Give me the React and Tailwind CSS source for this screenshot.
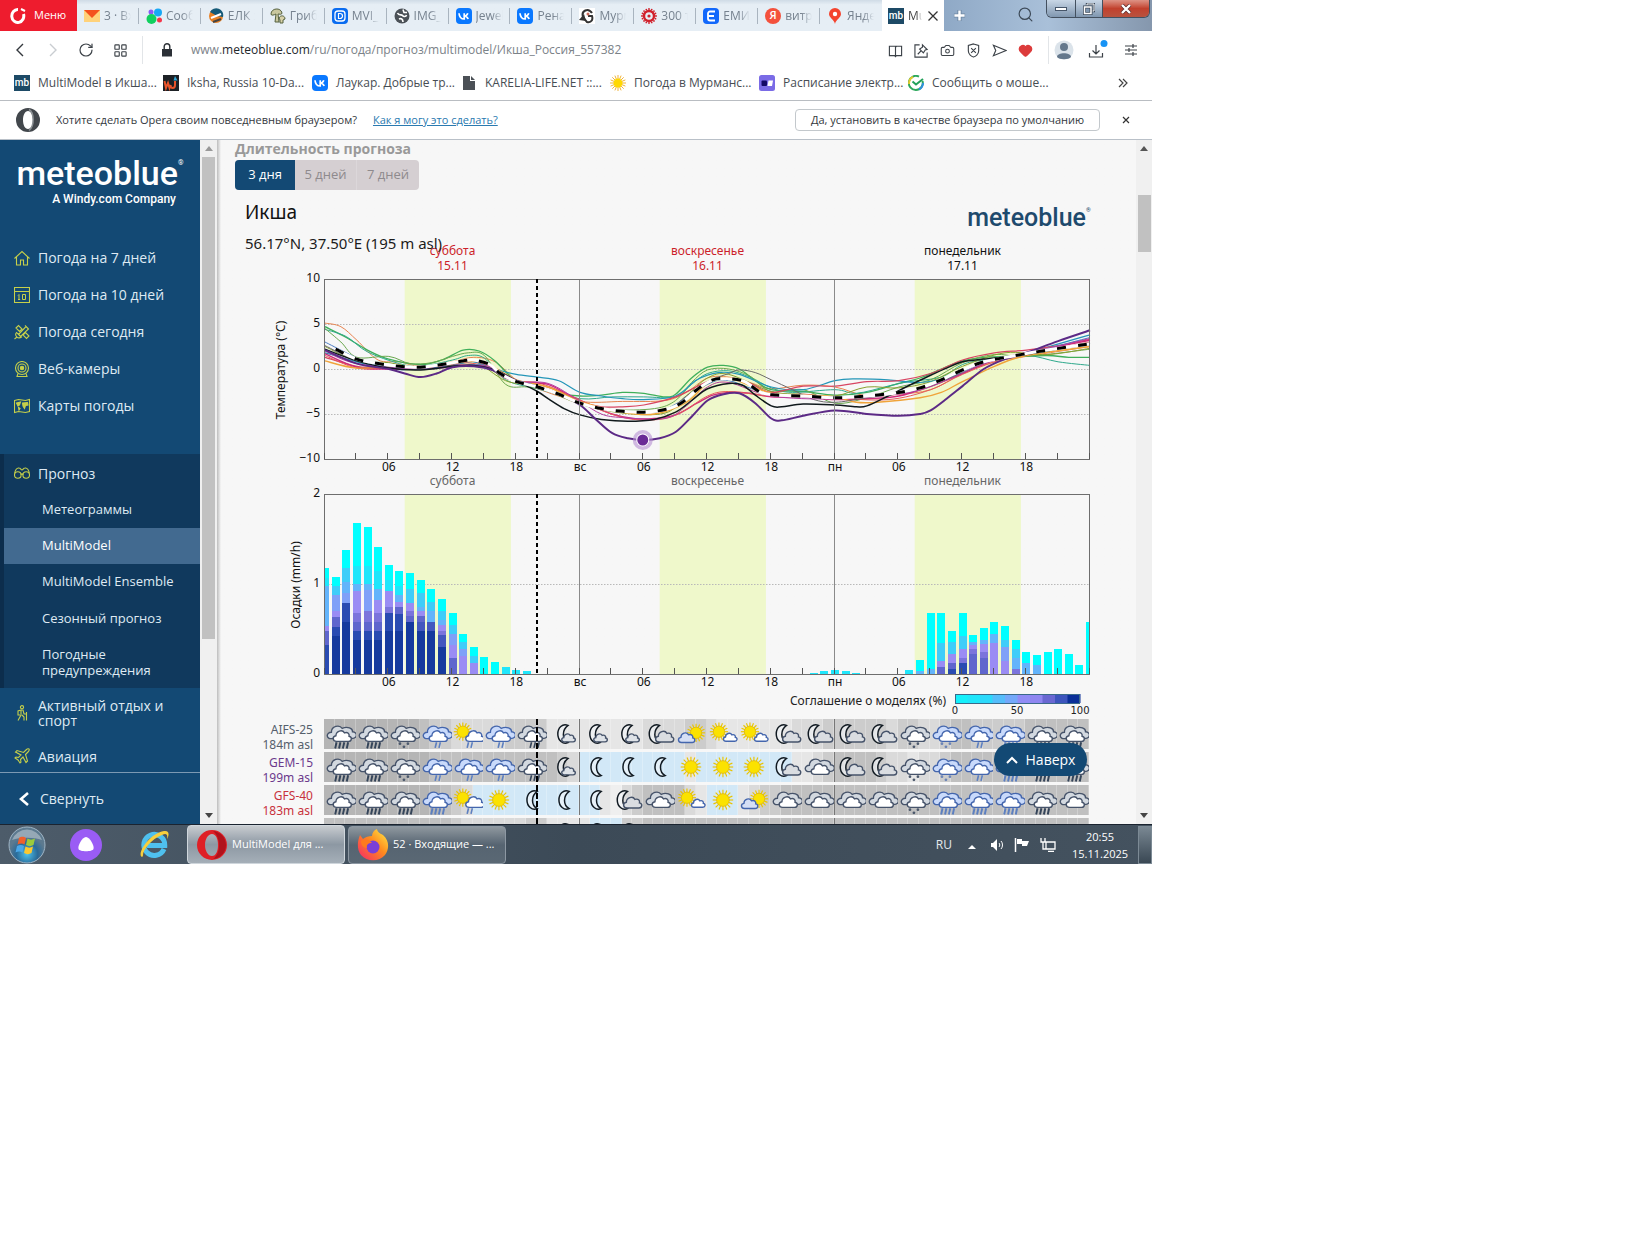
import React from "react";
import {
  BookOpen,
  Camera,
  SendHorizontal,
  Heart,
  Search,
  LayoutGrid,
  RotateCw,
} from "lucide-react";

const UI = "font-['Open_Sans','Noto_Sans',sans-serif]";

/* ---------- small brand marks ---------- */
const Mb = () => (
  <span className="flex h-4 w-4 shrink-0 items-center justify-center bg-[#1d4a66] font-['Roboto',sans-serif] text-[10px] font-medium text-white">
    mb
  </span>
);
const Vk = () => (
  <svg viewBox="0 0 16 16" className="h-4 w-4 shrink-0">
    <rect width="16" height="16" rx="4" fill="#0a78ff" />
    <path d="M3 5.200c.3 3.600 2 5.800 5.200 5.800V5.200M8.200 8c1.900-.1 3-1.200 3.600-2.800M8.200 8c2 .1 3.300 1.400 4 3" stroke="#fff" strokeWidth="1.700" fill="none" />
  </svg>
);
const Svg = ({ children, c = "h-4 w-4", vb = "0 0 16 16", ...p }) => (
  <svg viewBox={vb} className={"shrink-0 " + c} fill="none" {...p}>
    {children}
  </svg>
);

const RAYS = Array.from({ length: 16 }, (_, i) => (i * Math.PI) / 8);
const SunMark = () => (
  <Svg>
    {RAYS.map((a) => (
      <path key={a} d={`M8 8L${(8 + 8 * Math.cos(a)).toFixed(1)} ${(8 + 8 * Math.sin(a)).toFixed(1)}`} stroke="#f0b43c" />
    ))}
    <circle cx="8" cy="8" r="4.500" fill="#ffd800" />
  </Svg>
);

const tabs = [
  ["3 · Вх", <Svg><path d="M0 2h16v12H0z" fill="#ffd27a" /><path d="M0 2h16L8 10z" fill="#f4511e" /></Svg>],
  ["Сооб", <Svg><circle cx="5" cy="4" r="2.500" fill="#8a5cf6" /><circle cx="12" cy="4.500" r="4" fill="#18a8f5" /><circle cx="5.500" cy="11" r="5" fill="#11d05f" /><circle cx="13.500" cy="12" r="2.500" fill="#f5364a" /></Svg>],
  ["ЕЛК з", <Svg><circle cx="8" cy="8" r="7" fill="#e88024" /><path d="M2 4a7 7 0 0 1 13 5L9 8z" fill="#155a78" /><path d="M3 10l10-4" stroke="#fff" strokeWidth="2" /><path d="M5 14l8-3" stroke="#444" strokeWidth="2" /></Svg>],
  ["Гриб", <Svg><path d="M1 6c0-6 10-7 11-1 0 2-3 1-4 1l1 8H5l1-8C4 7 1 8 1 6z" fill="#c9c79e" stroke="#55613f" /><path d="M9 10c1-3 6-3 6 1l-2 1v3h-3v-3z" fill="#d8d1a8" stroke="#55613f" /></Svg>],
  ["MVI_", <Svg><rect width="16" height="16" rx="4" fill="#0a6cf0" /><rect x="3" y="3" width="10" height="10" rx="3" stroke="#fff" strokeWidth="1.300" /><path d="M6.500 5.500h1.500a2.500 2.500 0 0 1 0 5H6.500z" stroke="#fff" strokeWidth="1.200" /></Svg>],
  ["IMG_", <Svg><circle cx="8" cy="8" r="7.500" fill="#4b5157" /><path d="M3.500 5c1.500 3 4 1 5 2.500S12 9 12.500 7M9 1.500l1 3 3 0M5 11c2-1 4 0 4 3" stroke="#fff" strokeWidth="1.600" /></Svg>],
  ["Jewel", <Vk />],
  ["Рена", <Vk />],
  ["Мурм", <Svg><path d="M0 0h16v16H0z" fill="#fff" /><path d="M13 5C9-1 2 3 4 9l4 5c5 1 6-3 5-6H9" stroke="#333" strokeWidth="2" /><path d="M0 12l5-6 2 7z" fill="#333" /><circle cx="9" cy="6" r="1.500" fill="#c96a5a" /></Svg>],
  ["300 т", <Svg>{RAYS.map((a) => <circle key={a} cx={8 + 7 * Math.cos(a)} cy={8 + 7 * Math.sin(a)} r=".9" fill="#d1202b" />)}<circle cx="8" cy="8" r="5" stroke="#d1202b" strokeWidth="2.400" /><circle cx="8" cy="8" r="1.600" fill="#d1202b" /></Svg>],
  ["ЕМИА", <Svg><rect width="16" height="16" rx="4" fill="#1268fb" /><path d="M12 3.500H7a2 2 0 0 0-2 2v5a2 2 0 0 0 2 2h5M5 8h6" stroke="#fff" strokeWidth="1.800" /></Svg>],
  ["витра", <span className="flex h-4 w-4 shrink-0 items-center justify-center rounded-full bg-[#f4513c] text-[11px] font-semibold text-white">Я</span>],
  ["Янде", <Svg><path d="M8 0a6 6 0 0 1 6 6c0 4-5 5-6 10C7 11 2 10 2 6a6 6 0 0 1 6-6z" fill="#f4432e" /><circle cx="8" cy="6" r="2.200" fill="#fff" /></Svg>],
];

function TabStrip() {
  return (
    <div className="flex h-[31px] bg-linear-to-b from-[#cfdbe6] to-[#e6eef5] to-15%">
      <button className="flex w-[77px] shrink-0 items-center gap-2 bg-[#ee1c2e] pl-2.5 text-[11px] text-white">
        <Svg c="h-4 w-4"><path d="M8 1.500a6 6.500 0 1 0 5.500 4.500" stroke="#fff" strokeWidth="3" /><path d="M9.500 0.500v4.500" stroke="#ee1c2e" strokeWidth="1.500" /><path d="M11 1l4 2" stroke="#fff" strokeWidth="2" /></Svg>
        Меню
      </button>
      <div className="flex w-[805px] min-w-0">
        {tabs.map(([t, icon], i) => (
          <a key={t} href="#tab" className="flex min-w-0 flex-1 items-center pl-[7px] text-[12px] text-[#76828f]">
            {icon}
            <span className="ml-1 w-[27px] overflow-hidden whitespace-nowrap mask-r-from-60%">{t}</span>
            <span className={"ml-auto h-4 w-px " + (i < 12 ? "bg-[#a9b4bf]" : "")} />
          </a>
        ))}
      </div>
      <div className="flex w-[62px] shrink-0 items-center bg-white pl-1.5 text-[12px] text-[#444]">
        <Mb />
        <span className="ml-1 w-[14px] overflow-hidden whitespace-nowrap mask-r-from-60%">Mu</span>
        <button aria-label="Закрыть вкладку" className="ml-[5px]">
          <Svg c="h-3 w-3" vb="0 0 12 12"><path d="M1.500 1.500l9 9M10.500 1.500l-9 9" stroke="#333" strokeWidth="1.300" /></Svg>
        </button>
      </div>
      <div className="flex flex-1 items-start bg-linear-to-r from-[#8fa9c6] via-[#a9c0d9] to-[#8597ad] pr-0.5">
        <button aria-label="Новая вкладка" className="mt-[9px] ml-[9px]">
          <Svg c="h-[13px] w-[13px]" vb="0 0 14 14"><path d="M7 1v12M1 7h12" stroke="#6d87a3" strokeWidth="4.500" /><path d="M7 1.500v11M1.500 7h11" stroke="#fff" strokeWidth="2.600" /></Svg>
        </button>
        <Search className="mt-1.5 ml-auto h-[17px] w-[17px] text-[#3d4a58]" strokeWidth={1.7} />
        <div className="ml-3 flex h-[18px] w-[104px] shrink-0 overflow-hidden rounded-b-md border border-t-0 border-[#43505f]">
          <button aria-label="Свернуть" className="flex w-[29px] items-end justify-center border-r border-[#43505f] bg-linear-to-b from-[#c9d7e6] to-[#8097b0] pb-1.5">
            <span className="h-1 w-3 border border-[#46566a] bg-white" />
          </button>
          <button aria-label="Восстановить" className="flex w-[27px] items-center justify-center border-r border-[#43505f] bg-linear-to-b from-[#c9d7e6] to-[#8097b0]">
            <Svg c="h-3 w-3" vb="0 0 12 12"><path d="M4 1h7v7H4z" stroke="#3d4a5a" strokeWidth="2.400" /><path d="M4 1h7v7H4z" stroke="#fff" /><path d="M1.500 4h6.500v6.500H1.500z" fill="#8097b0" stroke="#3d4a5a" strokeWidth="3" /><path d="M1.500 4h6.500v6.500H1.500z" stroke="#fff" strokeWidth="1.500" /></Svg>
          </button>
          <button aria-label="Закрыть" className="flex flex-1 items-center justify-center bg-linear-to-b from-[#dd9285] via-[#c1402d] to-[#b8523e]">
            <Svg c="h-2.5 w-3" vb="0 0 12 10"><path d="M2 1l8 8M10 1l-8 8" stroke="#5a2a2a" strokeWidth="3.800" /><path d="M2 1l8 8M10 1l-8 8" stroke="#fff" strokeWidth="2.400" /></Svg>
          </button>
        </div>
      </div>
    </div>
  );
}

const ic = "h-[15px] w-[15px] text-[#3c4248]";

function AddressBar() {
  return (
    <div className="flex h-[38px] items-center bg-white pr-3.5 pl-3">
      <button aria-label="Назад" className="w-[33px]"><Svg c="h-4 w-4"><path d="M11 2L5 8l6 6" stroke="#33383d" strokeWidth="1.400" /></Svg></button>
      <button aria-label="Вперёд" className="w-[33px]"><Svg c="h-4 w-4"><path d="M5 2l6 6-6 6" stroke="#c9cdd1" strokeWidth="1.400" /></Svg></button>
      <button aria-label="Обновить" className="w-[35px]"><RotateCw className="h-4 w-4 text-[#3c4248]" strokeWidth={1.8} /></button>
      <button aria-label="Экспресс-панель" className="w-[29px]"><LayoutGrid className={ic} strokeWidth={1.8} /></button>
      <span className="h-7 w-px bg-[#e2e5e8]" />
      <Svg c="ml-[18px] h-[14px] w-3" vb="0 0 12 14"><path d="M1 6h10v7.500H1z" fill="#2b3036" /><path d="M3.200 6V3.500a2.800 2.800 0 0 1 5.600 0V6" stroke="#2b3036" strokeWidth="1.400" /></Svg>
      <a href="#page" className="ml-[18px] flex-1 text-[12px] whitespace-nowrap text-[#7b8288]">
        www.<span className="text-[#22272b]">meteoblue.com</span>/ru/погода/прогноз/multimodel/Икша_Россия_557382
      </a>
      <div className="flex items-center gap-[11px]">
        <Svg c="h-[15px] w-[15px]" stroke="#3c4248" strokeWidth="1.200"><path d="M8 3.500H1.500v10H7l1 1 1-1h5.500v-10H9l-1 1zM8 4v10" /></Svg>
        <Svg c="h-[15px] w-[15px]" stroke="#3c4248" strokeWidth="1.200"><path d="M6 2H1v13h13v-5M9 2l5 5-2 .5-2 3-4-4 3-2zM7.500 8.500L4 12" /></Svg>
        <Camera className={ic} strokeWidth={1.7} />
        <Svg c="h-[15px] w-[15px]" stroke="#3c4248" strokeWidth="1.200"><path d="M8 1l5.500 1.500v6C13.500 12 10 14.500 8 15c-2-.5-5.500-3-5.500-6.500v-6zM5.500 5.500l5 5M10.500 5.500l-5 5" /></Svg>
        <Svg c="h-[15px] w-[15px]" stroke="#3c4248" strokeWidth="1.200"><path d="M1.500 2.500L15 8 1.500 13.500 4 8z" /></Svg>
        <Heart className="h-[15px] w-[15px] fill-[#dc3b3b] text-[#dc3b3b]" />
      </div>
      <span className="ml-[15px] h-7 w-px bg-[#e2e5e8]" />
      <Svg c="ml-[5px] h-5 w-5" vb="0 0 20 20"><circle cx="10" cy="10" r="9.500" fill="#dbe3ea" /><circle cx="10" cy="7" r="4" fill="#64788c" /><path d="M3 17c0-5 14-5 14 0-2 3-12 3-14 0z" fill="#64788c" /></Svg>
      <button aria-label="Загрузки" className="ml-3.5">
        <Svg c="h-5 w-5" vb="0 0 20 20"><path d="M8 5v9M4.500 10.500L8 14l3.500-3.500M1.500 13v4h13v-4" stroke="#3c4248" strokeWidth="1.200" /><circle cx="16" cy="3.500" r="3.500" fill="#1793f5" /></Svg>
      </button>
      <button aria-label="Настройки" className="ml-4">
        <Svg c="h-3.5 w-3.5" vb="0 0 14 14"><path d="M1 3h12M1 7h12M1 11h12M9 1v4M5 5v4M9 9v4" stroke="#3c4248" strokeWidth="1.200" /></Svg>
      </button>
    </div>
  );
}

const bookmarks = [
  ["MultiModel в Икша...", <Mb />],
  ["Iksha, Russia 10-Da...", <Svg><rect width="16" height="16" fill="#1d2126" /><path d="M1.500 6l1.500 7 2-5 1.500 5 1-3c0 4 4.500 4 4.500 0V6" stroke="#e9542b" strokeWidth="2" /><path d="M12 1l2.500 4.500h-4z" fill="#35a9d8" /></Svg>],
  ["Лаукар. Добрые тр...", <Vk />],
  ["KARELIA-LIFE.NET ::...", <Svg><path d="M2 1h7v5h5v9H2zM10 1l4 4h-4z" fill="#4b5056" /></Svg>],
  ["Погода в Мурманс...", <SunMark />],
  ["Расписание электр...", <Svg><rect width="16" height="16" rx="2.500" fill="#7a6be6" /><rect x="2.500" y="5.500" width="5.500" height="5.500" rx="1" fill="#140a66" /><path d="M9.500 5.500H14L13 11H8.500z" fill="#fff" /></Svg>],
  ["Сообщить о моше...", <Svg><path d="M14.500 6A7 7 0 1 1 11 1.700" stroke="#2ca85c" strokeWidth="2" /><path d="M11 14.300A7 7 0 0 0 15 8" stroke="#2f8fe0" strokeWidth="2" /><path d="M1.200 9A7 7 0 0 1 5 1.800" stroke="#e6c92f" strokeWidth="2" /><path d="M4.500 6.500l3.500 3 7-5.500" stroke="#21a05a" strokeWidth="2" /></Svg>],
];

function Bookmarks() {
  return (
    <nav className="flex h-8 items-center border-b border-[#b9bdc2] bg-white pr-6 pb-1 pl-3.5 text-[12px] text-[#474d53]">
      {bookmarks.map(([t, icon]) => (
        <a key={t} href="#bookmark" className="flex w-[149px] items-center gap-2 whitespace-nowrap">
          {icon}
          {t}
        </a>
      ))}
      <button aria-label="Ещё закладки" className="ml-auto">
        <Svg c="h-2.5 w-2.5" vb="0 0 10 10"><path d="M1 1l4 4-4 4M5 1l4 4-4 4" stroke="#444" strokeWidth="1.200" /></Svg>
      </button>
    </nav>
  );
}

function Notice() {
  return (
    <div className="flex h-[39px] items-center border-b border-[#b9c0c8] bg-white pl-4 text-[11px] text-[#33383d]">
      <Svg c="h-6 w-6" vb="0 0 24 24"><path fillRule="evenodd" d="M12 0a12 12 0 1 0 0 24 12 12 0 0 0 0-24zM12 3c3 0 5 4 5 9s-2 9-5 9-5-4-5-9 2-9 5-9z" fill="#42474c" /><path d="M13 1.500c5 3 6 16 0 21" stroke="#8b9094" strokeWidth="1.500" /></Svg>
      <span className="ml-4 whitespace-nowrap">Хотите сделать Opera своим повседневным браузером?</span>
      <a href="#how" className="ml-4 whitespace-nowrap text-[#2a7ab0] underline">Как я могу это сделать?</a>
      <button className="ml-auto h-[22px] w-[305px] rounded border border-[#c3c8cc] whitespace-nowrap">Да, установить в качестве браузера по умолчанию</button>
      <button aria-label="Закрыть" className="mr-[22px] ml-[22px]">
        <Svg c="h-2 w-2" vb="0 0 8 8"><path d="M1 1l6 6M7 1L1 7" stroke="#333" strokeWidth="1.200" /></Svg>
      </button>
    </div>
  );
}

/* ---------- sidebar ---------- */
const Y = { stroke: "#c6d04a", strokeWidth: 1.1 };
const nav = [
  ["Погода на 7 дней", <Svg {...Y}><path d="M.5 8.500L8 1.500l7.500 7M2.500 7v8h4v-5h3v5h4V7" /></Svg>],
  ["Погода на 10 дней", <Svg {...Y}><path d="M.5.500h15v15H.5zM.5 4.500h15" /><path d="M5 7.500v5M4 12.500h2.200M4 8.500l1-1M8.500 7.500h3v5h-3z" strokeWidth="1" /></Svg>],
  ["Погода сегодня", <Svg {...Y}><path d="M2 4l2.500-2.500 3.500 3.500-2.500 2.500zM9 11l2.500-2.500 3.500 3.500-2.500 2.500zM4.500 10.500l7.500-8 2.500 2.500-8 7.500zM11 1.500l3.500 3.500M2.500 8.500c-2.500 3 1.500 7 5 4.500zM.5 15l2.500-2" /></Svg>],
  ["Веб-камеры", <Svg {...Y}><circle cx="8" cy="7" r="6.500" /><circle cx="8" cy="7" r="4" /><circle cx="8" cy="7" r="1.700" fill="#c6d04a" /><path d="M4 12.500l-1 3h10l-1-3" /></Svg>],
  ["Карты погоды", <Svg {...Y}><path d="M.5 2.500l4-1 7 1 4-1v12l-4 1-7-1-4 1z" /><path d="M2.500 5l4-1-1 3-1.500 1zM8.500 5l5-.5.5 2.500-2.500.5-1 3-1.500-2.500zM4.500 9.500l1.500 1-1 1.500z" fill="#c6d04a" /></Svg>],
];

function Sidebar() {
  const item = "flex h-[37px] items-center gap-2 pl-3.5 text-[14px] text-[#dfeaf3]";
  return (
    <aside className="flex w-[200px] shrink-0 flex-col bg-[#134974] text-[#dfeaf3]">
      <a href="#home" className="flex flex-col items-end pt-[13px] pr-[22px] font-['Roboto',sans-serif] text-white">
        <span className="flex items-start text-[34px] leading-10 font-medium">
          meteoblue<span className="-mr-1 w-1 text-[7px] leading-5 font-normal">®</span>
        </span>
        <span className="mr-0.5 text-[12px] leading-3 font-medium">A Windy.com Company</span>
      </a>
      <nav className="mt-[34px]">
        {nav.map(([t, icon]) => (
          <a key={t} href="#nav" className={item}>{icon}{t}</a>
        ))}
      </nav>
      <section className="mt-[30px] h-[234px] border-l-4 border-[#0c2d4c] bg-[#10395d] text-[13px]">
        <a href="#forecast" className="flex h-[38px] items-center gap-2 pl-2.5 text-[14px]">
          <Svg {...Y}><circle cx="3.800" cy="10" r="3.300" /><circle cx="12.200" cy="10" r="3.300" /><path d="M7 10c0-1.500 2-1.500 2 0M.7 8.500C1 5 3 2.500 5 3c1.500 0 2 2 3 2s1.500-2 3-2c2-.5 4 2 4.300 5.500" /></Svg>
          Прогноз
        </a>
        <a href="#meteogram" className="flex h-9 items-center pl-[38px]">Метеограммы</a>
        <a href="#multimodel" className="flex h-9 items-center bg-[#426a90] pl-[38px] text-white">MultiModel</a>
        <a href="#ensemble" className="flex h-9 items-center pl-[38px]">MultiModel Ensemble</a>
        <a href="#season" className="flex h-[38px] items-center pl-[38px]">Сезонный прогноз</a>
        <a href="#warnings" className="mt-2 block pl-[38px] leading-4">Погодные<br />предупреждения</a>
      </section>
      <a href="#sport" className="mt-2.5 flex items-center gap-2 pl-3.5 text-[14px] leading-[15px]">
        <Svg {...Y}><circle cx="8" cy="2.200" r="1.600" /><path d="M7 5l-3 1v4h2M7 5l2 0 1 4 2 0M7 5v5l-3 5.500M8 10l2 2v3.500M12.500 7v8.500" /></Svg>
        <span>Активный отдых и<br />спорт</span>
      </a>
      <a href="#aviation" className="mt-[19px] flex h-[18px] items-center gap-2 pl-3.5 text-[14px]">
        <Svg {...Y}><path d="M15 1c-1-.7-2 0-3 1L9.500 4.500 3 2.500 1.500 4 7 7 4.500 9.500 2 9 1 10l3 2 2 3 1-1-.5-2.500L9 9l3 5.500 1.500-1.500-2-6.500L14 4c1-1 1.700-2 1-3z" /></Svg>
        Авиация
      </a>
      <button className="mt-auto flex h-[52px] items-center gap-2.5 border-t border-[#7c99b3] pl-[18px] text-[14px]">
        <Svg c="h-4 w-3" vb="0 0 12 16"><path d="M10 2L3 8l7 6" stroke="#fff" strokeWidth="2.600" /></Svg>
        Свернуть
      </button>
    </aside>
  );
}

/* ---------- charts ---------- */
const PX = 10.625;
const X0 = 90;
const T0 = 139;
const cx = (h) => X0 + h * PX;
const ty = (t) => T0 - t * 9;

function curve(flat) {
  const p = [];
  for (let i = 0; i < flat.length; i += 2) p.push([cx(flat[i]), ty(flat[i + 1])]);
  let d = `M${p[0][0]} ${p[0][1]}`;
  for (let i = 0; i < p.length - 1; i++) {
    const a = p[i - 1] || p[i];
    const b = p[i];
    const c = p[i + 1];
    const e = p[i + 2] || c;
    d += `C${(b[0] + (c[0] - a[0]) / 6).toFixed(1)} ${(b[1] + (c[1] - a[1]) / 6).toFixed(1)} ${(c[0] - (e[0] - b[0]) / 6).toFixed(1)} ${(c[1] - (e[1] - b[1]) / 6).toFixed(1)} ${c[0].toFixed(1)} ${c[1].toFixed(1)}`;
  }
  return d;
}

const series = [
  ["#e8834f", 1, [0, 5.1, 1.5, 4.7, 3, 3.2, 5, 1, 7, 0.8, 9, 0.3, 12, 0.8, 14, 1.3, 16, 0.8, 18, -1.2, 20, -2.2, 24, -3.6, 28, -3.6, 32, -3.5, 34, -2.6, 36, -1, 38, -0.9, 40, -1.5, 42, -2.2, 45, -1.8, 48, -2, 51, -3, 54, -2.8, 57, -2.3, 60, -0.5, 63, 0.8, 66, 1.4, 72, 2.5]],
  ["#3faf5a", 1.3, [0, 4.7, 2, 3.5, 4, 2.1, 6, 1.1, 9, 0.5, 11, 1, 13, 2.1, 14.5, 2, 16, 0.9, 18, -1.4, 20, -2.1, 22, -2.7, 24, -3, 26, -2.9, 28, -2.6, 30, -2.7, 32, -3.1, 33, -2.8, 34.5, -1, 36, 0.2, 37.5, 0.4, 39, 0, 40.5, -1.3, 42, -2.3, 45, -2.5, 48, -2.9, 51, -2.6, 54, -1.6, 56, -1, 58, 0, 60, 0.9, 62, 1.3, 65, 1.4, 68, 1.5, 70, 1.3, 72, 1.3]],
  ["#2fa98c", 1, [0, 4.4, 2, 3.6, 4, 1.9, 7, 0.6, 9, 0.3, 12, 1, 13.5, 1.5, 15, 1.2, 17, -1.2, 20, -2.2, 24, -3.3, 27, -3.1, 30, -3.1, 33, -3.1, 34.5, -1.7, 36, -0.5, 38, -0.2, 40, -0.9, 42, -2.1, 44, -2.6, 48, -2.3, 50, -2.7, 53, -1.9, 55, -1.4, 58, -0.9, 60, 0.5, 62, 1, 66, 1.5, 69, 0.8, 72, 0.4]],
  ["#6aa84f", 1, [0, 4.5, 1.5, 3, 3, 1.3, 6, 1.4, 8, 0.6, 10, 0.7, 12, 1.4, 13.5, 1.8, 15, 1.5, 17, -1.7, 19, -2, 21, -2.4, 24, -3.7, 27, -4.5, 31, -4.4, 33, -3.5, 34.5, -1.5, 36, -0.1, 38, 0, 40, -0.8, 42, -2.5, 45, -2.3, 48, -3.8, 51, -3.2, 54, -2, 57, -1.2, 60, 0.7, 63, 1.6, 66, 1.4, 72, 2.2]],
  ["#88a030", 1, [0, 2.5, 3, 0.9, 6, 0.7, 9, 0.1, 12, 0.5, 14, 0.9, 17, -1.3, 20, -2, 24, -3.9, 28, -4.9, 32, -4.9, 34, -3, 36, -1, 38, -0.6, 42, -2.5, 45, -2.8, 48, -3, 51, -2, 54, -2.1, 57, -1.4, 60, 0.3, 64, 1.8, 68, 1.6, 72, 2.3]],
  ["#2496b8", 1.2, [0, 1.8, 3, 0.8, 6, 0, 9, 0, 12, 0.4, 14, 0.8, 16, 0, 18, -0.6, 20, -0.9, 22, -1.3, 24, -2.6, 26, -3, 28, -3.3, 30, -3.4, 33, -3, 35, -1.2, 37, -0.4, 39, -0.6, 42, -2, 45, -2.3, 48, -1.3, 50, -1.1, 53, -1.2, 56, -1.5, 59, -0.8, 62, 0.9, 66, 1.8, 72, 3.8]],
  ["#d84562", 1.2, [0, 1.3, 3, 0.3, 6, 0.1, 9, 0.1, 12, 0.6, 14, 0.9, 16, 0, 18, -1.3, 20, -1.5, 22, -2.4, 24, -3.6, 26, -4.2, 28, -4.2, 30, -4, 33, -3.1, 36, -1.4, 38, -1, 40, -1.6, 42, -2.6, 45, -1.9, 48, -1.9, 51, -1.4, 54, -1.3, 57, -0.5, 60, 1, 63, 1.8, 66, 2.1, 69, 2.6, 72, 3.3]],
  ["#d02a7c", 1.4, [0, 1.7, 3, 0.2, 6, 0, 9, 0.1, 12, 0.4, 15, 0.3, 17, -1, 19, -1.5, 21, -1.7, 23, -2.9, 25, -4, 27, -5, 29, -5.5, 31, -5.5, 33, -5.1, 35, -3.8, 36.5, -2.9, 38, -2.6, 40, -2.7, 42, -3.1, 45, -3.1, 48, -3.4, 51, -3.3, 54, -3, 57, -1.9, 60, -0.5, 63, 1, 66, 1.8, 72, 3.2]],
  ["#e65a5a", 1, [0, 1.5, 3, 0.1, 6, 0.1, 9, 0.1, 13, 0.7, 16, 0, 18, -1.4, 20, -1.7, 23, -2.9, 26, -4.6, 29, -5.6, 32, -5.5, 34, -4.5, 36, -3, 38, -2.5, 42, -3, 45, -2.8, 48, -3.2, 53, -3.4, 57, -2.3, 60, -0.6, 64, 1.1, 72, 3]],
  ["#f0a43a", 1.4, [0, 0.9, 3, 0.1, 7, 0.4, 9, 0.1, 13, 0.8, 15, 0.7, 18, -1.2, 21, -2, 24, -3.6, 28, -4.8, 31, -5, 34, -3.7, 36, -1.6, 38, -1, 42, -2.7, 45, -2.9, 48, -3.1, 50, -3.7, 52, -3.7, 56, -3.2, 58, -2.6, 60, -1.4, 63, 0.3, 66, 1.5, 72, 2.5]],
  ["#4a7cc4", 1, [0, 3, 2, 1.8, 4, 0.7, 6, 0.2, 9, 0, 12, 0.3, 15, 0.4, 17, -0.9, 20, -1.9, 24, -3.8, 27, -4.6, 31, -4.8, 33, -3.9, 36, -1.7, 38, -1.3, 42, -2.8, 48, -3.1, 54, -2.6, 58, -1.3, 62, 0.7, 66, 1.7, 72, 3.5]],
  ["#6a6a6a", 1, [0, 2.6, 3, 1, 7, 0.3, 12, 0.4, 15, 0.2, 17, -1, 20, -2, 24, -3.8, 28, -4.7, 32, -4.6, 34, -3, 36, -1.4, 38, -0.5, 39, -0.1, 40.5, -0.4, 42, -1.2, 44, -2.3, 46, -3.4, 48, -3.7, 51, -3.2, 56, -2.3, 60, -0.4, 64, 1.3, 72, 2.7]],
  ["#b43fa0", 1, [0, 2, 3, 0.6, 9, 0, 14, 0.4, 16, 0, 18, -1.4, 21, -1.6, 24, -3.6, 26, -5, 28, -5.4, 32, -5.5, 34, -4.1, 36, -2, 38, -1.5, 42, -3, 48, -3.3, 55, -2.6, 59, -1, 62, 0.6, 66, 1.7, 72, 3.4]],
  ["#10191c", 1.5, [0, 2.2, 3, 0.9, 6, 0.1, 9, -0.1, 12, 0.3, 14, 0.4, 16, -0.1, 18, -1.3, 20, -2.5, 21, -3.3, 22.5, -4.4, 24, -5.1, 26, -5.6, 28.5, -5.8, 31, -5.6, 33, -4.8, 34.5, -3.5, 36, -2.2, 38, -1.6, 39.3, -1.8, 40.5, -2.9, 42, -4.1, 43, -4.2, 45, -3.9, 48, -4, 50, -4.2, 51, -4.1, 53, -3, 55, -1.8, 57, -0.7, 58.5, 0.1, 60, 0.8, 62, 1.1, 66, 1.6, 72, 2.9]],
  ["#5c2a86", 2, [0, 2.1, 3, 0.6, 6, 0, 7.5, -0.5, 9, -0.9, 10.5, -0.5, 12, 0.2, 14, 0.3, 16, -0.2, 18, -1.3, 20, -2, 22, -2.8, 24, -4, 25.5, -5.6, 27, -7.1, 28.5, -7.7, 30, -7.9, 31.5, -7.7, 33, -7, 34.5, -5.3, 36, -3.5, 37.5, -2.8, 39, -2.7, 40.5, -3.8, 42, -5.5, 43, -5.7, 45, -5.2, 48, -4.6, 51, -5, 54, -5.2, 56, -5, 57, -4.6, 58.5, -3.3, 60, -1.9, 62, 0, 64, 1.1, 66, 1.8, 69, 3.1, 72, 4.3]],
];
const mean = curve([1, 2.2, 3, 1.1, 5, 0.6, 7, 0.3, 9, 0.2, 11, 0.5, 13, 0.9, 14, 1, 15.5, 0.5, 16.5, -0.5, 18, -1.4, 20, -2, 22, -2.8, 24, -3.8, 26, -4.4, 28, -4.7, 30, -4.8, 32, -4.5, 33.5, -3.8, 35, -2.3, 36.5, -1.2, 38, -1.1, 39.5, -1.4, 41, -2.6, 42.5, -2.9, 45, -3, 48, -3.2, 51, -3, 54, -2.6, 56, -2.1, 58, -1.2, 60, -0.1, 62, 0.8, 65, 1.5, 68, 2.1, 72, 2.8]);

const shades = ["#00ffff", "#1fe6fb", "#3fcdf9", "#63b4fb", "#7fa0f8", "#9a8cf4", "#7b74dc", "#5f66cd", "#4357bf", "#2a4bb2", "#163a9e"];
/* hour, then pairs of (top in mm/h, shade) from light to dark */
const rain = [
  [0, 1.18, 0, 1.07, 1, 0.98, 3, 0.53, 5, 0.48, 7, 0.32, 9],
  [1, 1.08, 0, 0.98, 2, 0.88, 4, 0.7, 5, 0.63, 7, 0.52, 9, 0.42, 10],
  [2, 1.38, 0, 1.18, 2, 1.02, 3, 0.9, 4, 0.79, 9, 0.58, 10],
  [3, 1.68, 0, 1.2, 1, 1, 3, 0.92, 5, 0.68, 6, 0.58, 7, 0.48, 9, 0.38, 10],
  [4, 1.63, 0, 1.2, 1, 1, 3, 0.93, 4, 0.7, 6, 0.58, 7, 0.48, 9, 0.38, 10],
  [5, 1.41, 0, 1.15, 1, 0.95, 3, 0.82, 5, 0.68, 6, 0.58, 7, 0.48, 9, 0.38, 10],
  [6, 1.21, 0, 1.05, 1, 0.92, 5, 0.75, 6, 0.68, 9, 0.48, 10],
  [7, 1.14, 0, 0.98, 1, 0.88, 3, 0.8, 5, 0.74, 7, 0.67, 9, 0.48, 10],
  [8, 1.12, 0, 0.95, 2, 0.79, 5, 0.7, 6, 0.65, 7, 0.58, 10],
  [9, 1.05, 0, 0.9, 2, 0.75, 3, 0.7, 5, 0.65, 7, 0.58, 8, 0.48, 10],
  [10, 0.95, 0, 0.8, 2, 0.7, 3, 0.58, 8, 0.48, 10],
  [11, 0.83, 0, 0.7, 2, 0.6, 3, 0.55, 5, 0.48, 6, 0.43, 8, 0.3, 10],
  [12, 0.68, 0, 0.55, 2, 0.45, 4, 0.32, 5, 0.18, 7],
  [13, 0.45, 0, 0.36, 2, 0.28, 4, 0.2, 5],
  [14, 0.3, 0, 0.2, 2, 0.12, 5],
  [15, 0.19, 0], [16, 0.13, 0], [17, 0.08, 1], [18, 0.05, 1], [19, 0.03, 1],
  [46, 0.01, 1], [47, 0.03, 1], [48, 0.05, 1], [49, 0.03, 1], [50, 0.01, 1], [55, 0.05, 1],
  [56, 0.16, 0, 0.03, 3],
  [57, 0.68, 0, 0.06, 3],
  [58, 0.68, 0, 0.35, 2, 0.15, 5, 0.08, 7],
  [59, 0.48, 0, 0.36, 2, 0.22, 5, 0.12, 7, 0.06, 9],
  [60, 0.68, 0, 0.42, 2, 0.28, 5, 0.18, 6, 0.12, 9],
  [61, 0.43, 0, 0.36, 3, 0.32, 5, 0.28, 6, 0.22, 7],
  [62, 0.51, 0, 0.38, 3, 0.33, 5, 0.25, 6, 0.18, 7],
  [63, 0.58, 0, 0.45, 3, 0.35, 5],
  [64, 0.53, 0, 0.38, 2, 0.3, 4, 0.15, 5],
  [65, 0.38, 0, 0.28, 2, 0.18, 3, 0.06, 6],
  [66, 0.25, 0, 0.12, 3], [67, 0.21, 0, 0.1, 3], [68, 0.25, 0], [69, 0.28, 0], [70, 0.22, 0], [71, 0.1, 0], [72, 0.58, 0],
];
const P0 = 444;
const days = ["суббота", "воскресенье", "понедельник"];
const dates = ["15.11", "16.11", "17.11"];
const legend = ["#14f0fb", "#1fe6fb", "#2cd9fb", "#55bdfb", "#74a8fa", "#918cf5", "#8f86f0", "#6a68d2", "#3d55bd", "#0a2f98"];

function Frame({ top, bottom }) {
  return (
    <g shapeRendering="crispEdges" transform="translate(-1 0)">
      {[24, 48].map((h) => <path key={h} d={`M${cx(h)} ${top}V${bottom}`} stroke="#8a8a8a" />)}
      <rect x={X0} y={top} width={765} height={bottom - top} fill="none" stroke="#6e6e6e" />
      {Array.from({ length: 25 }, (_, i) => <path key={i} d={`M${cx(i * 3)} ${bottom}v-6`} stroke="#555" />)}
      <path d={`M${cx(20)} ${top}V${bottom}`} stroke="#000" strokeWidth="2" strokeDasharray="4 3" />
    </g>
  );
}

function Charts() {
  const hours = [[6, "06"], [12, "12"], [18, "18"], [24, "вс"], [30, "06"], [36, "12"], [42, "18"], [48, "пн"], [54, "06"], [60, "12"], [66, "18"]];
  return (
    <svg viewBox="0 0 865 489" className="block w-full font-['Noto_Sans','DejaVu_Sans',sans-serif]" fontSize="12" role="img" aria-label="Температура и осадки">
      {[0, 1, 2].map((d) => (
        <g key={d}>
          <rect x={cx(24 * d + 7.5)} y="49" width={10 * PX} height="180" fill="#eff8cb" />
          <rect x={cx(24 * d + 7.5)} y="264" width={10 * PX} height="180" fill="#eff8cb" />
          <g textAnchor="middle">
            <g fill={d < 2 ? "#cc1f2b" : "#111"}>
              <text x={cx(24 * d + 12)} y="25">{days[d]}</text>
              <text x={cx(24 * d + 12)} y="40">{dates[d]}</text>
            </g>
            <text x={cx(24 * d + 12)} y="255" fill="#666">{days[d]}</text>
          </g>
        </g>
      ))}
      <text x="10" y="19" fontSize="15" fill="#1c1c1c">56.17°N, 37.50°E (195 m asl)</text>
      {[5, 0, -5].map((t) => <path key={t} d={`M${X0} ${ty(t) + 0.5}h765`} stroke="#b9b9b9" strokeDasharray="1.500 1.500" />)}
      <path d={`M${X0} 354.500h765`} stroke="#b9b9b9" strokeDasharray="1.500 1.500" />
      <g textAnchor="end" fill="#111">
        {[10, 5, 0, -5, -10].map((t) => <text key={t} x="85" y={ty(t) + 3}>{t < 0 ? "−" + -t : t}</text>)}
        {[2, 1, 0].map((v) => <text key={v} x="85" y={P0 - 90 * v + 3}>{v}</text>)}
      </g>
      <g textAnchor="middle" fill="#111">
        <text transform="translate(50 140) rotate(-90)">Температура (°C)</text>
        <text transform="translate(65 355) rotate(-90)">Осадки (mm/h)</text>
        {hours.map(([h, t]) => (
          <g key={h}>
            <text x={cx(h)} y="241">{t}</text>
            <text x={cx(h)} y="456">{t}</text>
          </g>
        ))}
      </g>
      <g fill="none" strokeLinejoin="round">
        {series.map(([c, w, pts]) => <path key={c} d={curve(pts)} stroke={c} strokeWidth={w} />)}
        <path d={mean} stroke="#fff" strokeWidth="3" />
        <path d={mean} stroke="#000" strokeWidth="3" strokeDasharray="9 12" />
      </g>
      <circle cx={cx(30) - 1} cy="210" r="10" fill="#b58fd2" fillOpacity=".6" />
      <circle cx={cx(30) - 1} cy="210" r="6.500" fill="#fff" />
      <circle cx={cx(30) - 1} cy="210" r="5.500" fill="#6a2a96" />
      <g shapeRendering="crispEdges">
        {rain.map(([h, ...s]) => {
          const x = h === 0 ? X0 : cx(h) - 4;
          const w = h === 0 || h === 72 ? 4 : 8;
          return s.map((v, i) => (i % 2 ? null : <rect key={h + "-" + i} x={x} y={P0 - v * 90} width={w} height={v * 90} fill={shades[s[i + 1]]} />));
        })}
      </g>
      <Frame top={49} bottom={229} />
      <Frame top={264} bottom={444} />
      <text x="711" y="475" textAnchor="end" fill="#222">Соглашение о моделях (%)</text>
      {legend.map((c, i) => <rect key={c} x={720 + i * 12.5} y="464" width="13" height="9" fill={c} />)}
      <rect x="720.500" y="464.500" width="124" height="9" fill="none" stroke="#3a6a8a" />
      <g textAnchor="middle" fontSize="10" fill="#222" className="font-['DejaVu_Sans',sans-serif]">
        <text x="720" y="484">0</text>
        <text x="782" y="484">50</text>
        <text x="845" y="484">100</text>
      </g>
    </svg>
  );
}

/* ---------- weather pictograms, one per three hours ---------- */
const DK = "#46536a";
const BL = "#4466ad";
const Puff = ({ x, y, s = 1, c = DK, f = "#fff" }) => (
  <path transform={`translate(${x} ${y}) scale(${s})`} d="M3.500 10.500C0 10.500-.5 6 3 5.500 3 1.500 8.500-.5 10.500 3c3-1 4.500 1 4 3 3 .5 2.500 4.500-.5 4.500z" fill={f} stroke={c} strokeWidth={1.2 / s} />
);
const Clouds = ({ c }) => {
  const f = c === BL ? "#c9dafb" : "#d3d9e0";
  return (
    <g>
      <path d="M9 19C3 20 3 13.500 8 13.500 8 8 15 6.500 17.500 10 22 8 27 10 26.500 13c5 .5 4.500 6-1 6z" fill={f} stroke={c} strokeWidth="1.200" />
      <Puff x={9} y={11} c={c} />
    </g>
  );
};
const Drops = ({ c, n = 4 }) => (
  <g stroke={c === BL ? "#5c7fc0" : "#344459"} strokeWidth={n === 4 ? 1.7 : 1.4}>
    {Array.from({ length: n }, (_, i) => <path key={i} d={`M${(n === 4 ? 12.5 : 16) + i * 3.4} 22.200l-1.200 ${n === 4 ? 5.5 : 5}`} />)}
  </g>
);
const Flakes = ({ c }) => (
  <g fill={c === BL ? "#6c84b5" : "#4c596c"}>
    <circle cx="12" cy="23.500" r="1.200" /><circle cx="15.500" cy="26.300" r="1.200" /><circle cx="19" cy="23.500" r="1.200" />
  </g>
);
const Sun = ({ x = 15.5, y = 15, r = 9 }) => (
  <g>
    {RAYS.map((a) => <path key={a} d={`M${x} ${y}L${(x + r * Math.cos(a)).toFixed(1)} ${(y + r * Math.sin(a)).toFixed(1)}`} stroke="#e9c400" />)}
    <circle cx={x} cy={y} r={r * 0.62} fill="#fbe200" stroke="#e0bb10" strokeWidth=".8" />
  </g>
);
const Moon = ({ x = 1 }) => <path transform={`translate(${x} 0)`} d="M20 7.500c-5-2-9 2-9 7.500s4.500 9.500 9 7.500c-5.500-3-5.500-11 0-15z" fill="#f3f7fa" fillOpacity=".6" stroke="#111a22" strokeWidth="1.300" />;

const icons = {
  R: <g><Clouds c={DK} /><Drops c={DK} /></g>,
  r: <g><Clouds c={DK} /><Drops c={DK} n={3} /></g>,
  S: <g><Clouds c={DK} /><Flakes c={DK} /></g>,
  s: <g><Clouds c={BL} /><Flakes c={BL} /></g>,
  B: <g><Clouds c={BL} /><Drops c={BL} /></g>,
  b: <g><Clouds c={BL} /><Drops c={BL} n={2} /></g>,
  C: <Clouds c={DK} />,
  P: <g><Sun x={11} y={13} r={8} /><Puff x={13} y={11} c={BL} /><Drops c={BL} n={2} /></g>,
  O: <Sun />,
  o: <g><Sun x={12} y={13} r={8} /><Puff x={15.5} y={13.5} s={0.75} c={BL} /></g>,
  Q: <g><Sun x={20} y={14} r={8} /><Puff x={4} y={13} s={0.9} c={BL} f="#d5dff5" /></g>,
  M: <Moon />,
  m: <g><Moon x={0} /><Puff x={14} y={14} s={0.75} f="#dfe3e8" /></g>,
  N: <g><Moon x={-4} /><Puff x={12} y={11.5} f="#dadde1" /></g>,
};
const bgs = {
  a: "bg-[#b5b5b5]",
  b: "bg-[#c0c0c0]",
  c: "bg-[#cccccc]",
  d: "bg-[#dadada]",
  e: "bg-[#e6e6e6]",
  f: "bg-[#efefef]",
  s: "bg-[#d2e8f7]",
};
const models = [
  ["AIFS-25", "184m asl", "text-[#55606c]", "RRSbPbrmmmNQooNNNNSsbBRR", "aaaaaaaaabccdddddcccceeeeeeeeeddddccdeeeeeeedddccccccdccddcbbcccccbbbbbb"],
  ["GEM-15", "199m asl", "text-[#6b3a8c]", "RRSbbbrmMMMOOONCNNSsbBRR", "aaaaaaaaaabbbbbbbbbbbbcdssssssssssessssssssseedcbbbbcddeddcbbbbbbbbbbbbb"],
  ["GFS-40", "183m asl", "text-[#c8323c]", "RRRBPOMMMNCoOQCCCCSBBBRC", "aaaaaaaaaaabcdssssssssssssefdcbbbbdesssedccbbbbbbbbbbbbbbbbbbbbbbbbbbbbb"],
  ["", "", "", "CCCCCCCmmmCCCCCCCCCCCCCC", "bbbbbbbbbbbbcddddddcceeeesssccbbbbbbbbbbbbbbbbbbbbbbbbbbbbbbbbbbbbbbbbbb"],
];
const slots = ["col-start-1", "col-start-2", "col-start-3"];

function ModelRows() {
  return (
    <div className="mr-[11px] grid grid-cols-[89px_1fr] gap-y-[3px] font-['Noto_Sans',sans-serif] text-[12px] leading-[15px]">
      {models.map(([name, alt, color, seq, bg], r) => (
        <React.Fragment key={r}>
          <div className={"h-[30px] pt-[3px] pr-[11px] text-right " + color}>
            <div>{name}</div>
            <div>{alt}</div>
          </div>
          <div className="relative flex h-[30px]">
            {seq.split("").map((k, i) => (
              <div key={i} className="grid flex-1 grid-cols-3">
                {slots.map((slot, j) => (
                  <span key={j} className={"row-start-1 border-r border-white/25 " + slot + " " + bgs[bg[i * 3 + j]]} />
                ))}
                <svg viewBox="1.500 2 28 26" className="col-span-3 col-start-1 row-start-1 h-[30px] w-full" fill="none">{icons[k]}</svg>
              </div>
            ))}
            <span className="absolute inset-y-0 left-1/3 w-px bg-[#777]" />
            <span className="absolute inset-y-0 left-2/3 w-px bg-[#777]" />
            <span className="absolute inset-y-0 left-[27.700%] border-l-2 border-dashed border-black" />
          </div>
        </React.Fragment>
      ))}
    </div>
  );
}

function ScrollBar({ thumb, wrap, arrow = "#555" }) {
  return (
    <div className={"flex shrink-0 flex-col items-center bg-[#f0f0f0] " + wrap}>
      <Svg c="mt-1.5 h-[5px] w-2" vb="0 0 8 5"><path d="M0 5l4-5 4 5z" fill={arrow} /></Svg>
      <div className={"w-[13px] bg-[#c1c1c1] " + thumb} />
      <Svg c="mt-auto mb-1.5 h-[5px] w-2" vb="0 0 8 5"><path d="M0 0l4 5 4-5z" fill="#444" /></Svg>
    </div>
  );
}

function Content() {
  return (
    <main className="relative min-w-0 flex-1 overflow-hidden bg-linear-to-r from-[#bdbdbd] to-[#f7f7f7] to-[4px] pr-9 pl-[18px]">
      <h2 className="h-5 text-[14px] leading-[17px] font-bold text-[#999]">Длительность прогноза</h2>
      <div className="flex h-[30px] w-fit overflow-hidden rounded bg-[#d5cfd2] text-[13px] text-[#8e8a8d]">
        <button className="w-[60px] bg-[#134974] text-white">3 дня</button>
        <button className="w-[62px] border-r border-[#dcd7da]">5 дней</button>
        <button className="w-[62px]">7 дней</button>
      </div>
      <div className="flex h-10 items-start justify-between px-2.5">
        <h1 className="mt-2 font-['Noto_Sans',sans-serif] text-[19px] leading-7 text-[#111]">Икша</h1>
        <span className="mt-3 flex items-start font-['Roboto',sans-serif] text-[25px] leading-8 font-medium text-[#1e4a6d]">
          meteoblue<span className="w-1 text-[6px] leading-4">®</span>
        </span>
      </div>
      <Charts />
      <ModelRows />
      <a href="#top" className="absolute right-[49px] bottom-12 flex h-[33px] w-[93px] items-center justify-center gap-2 rounded-full bg-[#134974] text-[14px] text-white">
        <Svg c="h-2 w-3" vb="0 0 12 8"><path d="M1 7l5-5 5 5" stroke="#fff" strokeWidth="2" /></Svg>
        Наверх
      </a>
    </main>
  );
}

/* ---------- taskbar ---------- */
function Taskbar() {
  return (
    <footer className="flex h-10 items-center border-t border-[#1b2430] bg-linear-to-r from-[#4d5c6a] via-[#3c4a57] to-[#44525f] text-[11px] text-white">
      <button aria-label="Пуск" className="ml-2">
        <Svg c="h-[38px] w-[38px]" vb="0 0 38 38">
          <defs><radialGradient id="orb" cy=".75"><stop offset="0" stopColor="#4cc4ee" /><stop offset=".6" stopColor="#2a6a98" /><stop offset="1" stopColor="#5d7a8f" /></radialGradient></defs>
          <circle cx="19" cy="19" r="18" fill="url(#orb)" stroke="#9fb4c4" />
          <path d="M4 14a16 16 0 0 1 30 0c-8-3-22-3-30 0z" fill="#fff" opacity=".35" />
          <path d="M11 12c3-2 5-1 7 0l-1.500 6.500c-2-1.500-4.500-1.500-7 0z" fill="#f0602c" />
          <path d="M19.500 12.500c2 1.500 5 1.500 7.500 0L25.500 19c-2.500 1.500-5 1.500-7.500 0z" fill="#9ccb3b" />
          <path d="M9 20c2.500-1.500 5-1.500 7 0l-1.500 6.500c-2-1.500-4.500-1.500-7 0z" fill="#4aa7e8" />
          <path d="M17.500 20.500c2.500 1.500 5 1.500 7.500 0L23.500 27c-2.500 1.500-5 1.500-7.500 0z" fill="#fbc82f" />
        </Svg>
      </button>
      <button aria-label="Алиса" className="ml-6">
        <Svg c="h-8 w-8" vb="0 0 32 32"><circle cx="16" cy="16" r="16" fill="#9a5cf5" /><path d="M16 8c4 0 8.500 9 7.500 12-1 3-14 3-15 0S12 8 16 8z" fill="#fff" /></Svg>
      </button>
      <button aria-label="Internet Explorer" className="ml-9">
        <Svg c="h-8 w-8" vb="0 0 32 32"><path d="M26 20a10.500 10.500 0 1 1 .8-3.500H9" stroke="#4fc0ee" strokeWidth="5" /><path d="M4 28c-6-3 8-24 22-26 6-1 5 5 3 8 1-5-1-6-5-4C13 10 4 22 5 27z" fill="#f8cf3c" /></Svg>
      </button>
      <button className="ml-[17px] flex h-[39px] w-[158px] items-center gap-1 rounded-sm border border-[#cfd6dc] bg-linear-to-b from-[#c8ccd0] via-[#8d98a3] to-[#a5afb8] pl-2 whitespace-nowrap">
        <Svg c="h-8 w-8" vb="0 0 32 32"><path fillRule="evenodd" d="M16 1a15 15 0 1 0 0 30 15 15 0 0 0 0-30zM16 5c4 0 6 5 6 11s-2 11-6 11-7-5-7-11 3-11 7-11z" fill="#df1f26" /><path d="M17 2c8 1 13 7 13 14s-5 13-13 14c8-5 8-22 0-28z" fill="#b0121c" /></Svg>
        MultiModel для ...
      </button>
      <button className="ml-[3px] flex h-[38px] w-[158px] items-center gap-1 rounded-sm border border-[#8d98a3] bg-linear-to-b from-[#8f989f] via-[#566471] to-[#5a6874] pl-2 whitespace-nowrap">
        <Svg c="h-8 w-8" vb="0 0 32 32">
          <defs><linearGradient id="fx" x1="1" y1="0" x2="0" y2="1"><stop offset="0" stopColor="#fff04a" /><stop offset=".45" stopColor="#ff8a1e" /><stop offset="1" stopColor="#f5246c" /></linearGradient></defs>
          <path d="M20 0c0 3 4 5 6 6 7 6 6 15 2 20-6 7-18 7-24 0C0 21 0 13 3 6l3 4c2-2 6-3 9-3 0-3 2-6 5-7z" fill="url(#fx)" />
          <circle cx="16" cy="18" r="6.500" fill="#7a3fd6" /><path d="M4 12c5-3 8-1 11 2-4 0-6 2-5 5-4 0-6-3-6-7z" fill="#ff7a1e" />
        </Svg>
        52 · Входящие — ...
      </button>
      <span className="ml-auto text-[12px] text-[#e4e9ed]">RU</span>
      <div className="ml-4 flex items-center gap-2.5">
        <Svg c="mt-1 mr-1 h-1 w-2" vb="0 0 8 4"><path d="M0 4l4-4 4 4z" fill="#fff" /></Svg>
        <Svg c="h-3.5 w-3.5" vb="0 0 14 14"><path d="M1 5h2l4-4v12L3 9H1z" fill="#fff" /><path d="M9 5c1 1 1 3 0 4M11 3c2 2 2 6 0 8" stroke="#fff" /></Svg>
        <Svg c="h-3.5 w-4" vb="0 0 16 14"><path d="M1.500 0v14" stroke="#fff" strokeWidth="1.500" /><path d="M3 1h5v2h7l-2 5H8V6H3z" fill="#fff" /></Svg>
        <Svg c="h-3.5 w-4" vb="0 0 16 14"><path d="M6 4h9v7H6zM8 13.500h6M1 0v4h4V0M3 4v7h3" stroke="#fff" strokeWidth="1.300" /></Svg>
      </div>
      <div className="ml-3.5 w-[60px] text-center leading-[17px]">20:55<br />15.11.2025</div>
      <button aria-label="Показать рабочий стол" className="ml-2 h-[38px] w-[14px] border border-[#7c8a95] bg-linear-to-b from-[#7a8893] to-[#3a4854]" />
    </footer>
  );
}

export default function App() {
  return (
    <div className="min-h-screen bg-white">
      <div className={"w-full max-w-6xl " + UI}>
        <TabStrip />
        <AddressBar />
        <Bookmarks />
        <Notice />
        <div className="flex h-[684px]">
          <Sidebar />
          <ScrollBar wrap="w-[17px]" thumb="mt-1.5 h-[482px]" arrow="#999" />
          <Content />
          <ScrollBar wrap="w-4" thumb="mt-11 h-[57px]" />
        </div>
        <Taskbar />
      </div>
    </div>
  );
}
